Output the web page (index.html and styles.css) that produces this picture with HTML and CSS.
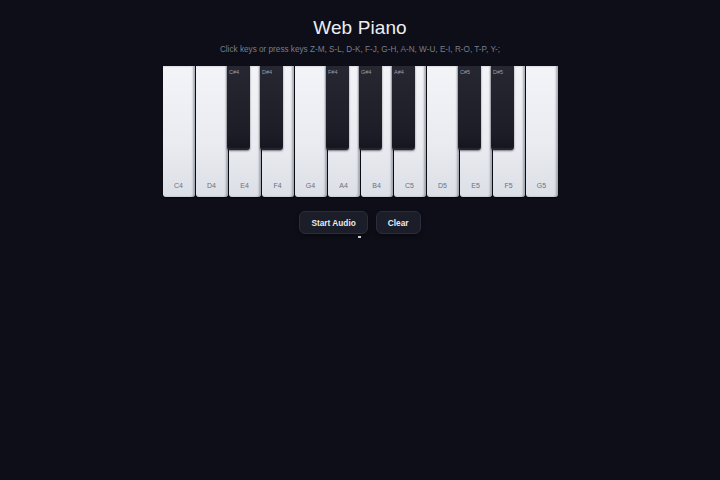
FILE: index.html
```html
<!DOCTYPE html>
<html lang="en">
<head>
<meta charset="utf-8">
<title>Web Piano</title>
<link rel="stylesheet" href="styles.css">
</head>
<body>
<main class="app">
  <h1 class="title">Web Piano</h1>
  <p class="hint">Click keys or press keys Z-M, S-L, D-K, F-J, G-H, A-N, W-U, E-I, R-O, T-P, Y-;</p>
  <div class="piano">
    <div class="key white c1"><span class="label">C4</span></div>
    <div class="key white c2"><span class="label">D4</span></div>
    <div class="key white c3"><span class="label">E4</span></div>
    <div class="key white c4"><span class="label">F4</span></div>
    <div class="key white c5"><span class="label">G4</span></div>
    <div class="key white c6"><span class="label">A4</span></div>
    <div class="key white c7"><span class="label">B4</span></div>
    <div class="key white c8"><span class="label">C5</span></div>
    <div class="key white c9"><span class="label">D5</span></div>
    <div class="key white c10"><span class="label">E5</span></div>
    <div class="key white c11"><span class="label">F5</span></div>
    <div class="key white c12"><span class="label">G5</span></div>
    <div class="key black c3"><span class="blabel">C#4</span></div>
    <div class="key black c4"><span class="blabel">D#4</span></div>
    <div class="key black c6"><span class="blabel">F#4</span></div>
    <div class="key black c7"><span class="blabel">G#4</span></div>
    <div class="key black c8"><span class="blabel">A#4</span></div>
    <div class="key black c10"><span class="blabel">C#5</span></div>
    <div class="key black c11"><span class="blabel">D#5</span></div>
  </div>
  <div class="controls">
    <button class="btn btn-start">Start Audio</button>
    <button class="btn">Clear</button>
  </div>
</main>
</body>
</html>
```
FILE: styles.css
```css
html, body {
  margin: 0;
  padding: 0;
  background: #0d0e17;
  height: 100%;
}
body {
  font-family: "Liberation Sans", Arial, sans-serif;
  color: #e6e8ee;
}
.app {
  display: flex;
  flex-direction: column;
  align-items: center;
  padding-top: 17px;
}
.title {
  margin: 0;
  font-size: 19px;
  line-height: 22px;
  font-weight: 400;
  color: #eceef3;
  letter-spacing: 0.1px;
}
.hint {
  margin: 5px 0 0;
  font-size: 8.2px;
  line-height: 12px;
  color: #7a7e8c;
}
.piano {
  margin-top: 10px;
  display: grid;
  grid-template-columns: repeat(12, 32px);
  grid-template-rows: 131px;
  column-gap: 1px;
}
.key { grid-row: 1; }
.c1 { grid-column: 1; }
.c2 { grid-column: 2; }
.c3 { grid-column: 3; }
.c4 { grid-column: 4; }
.c5 { grid-column: 5; }
.c6 { grid-column: 6; }
.c7 { grid-column: 7; }
.c8 { grid-column: 8; }
.c9 { grid-column: 9; }
.c10 { grid-column: 10; }
.c11 { grid-column: 11; }
.c12 { grid-column: 12; }
.white {
  background: linear-gradient(180deg, #f3f4f8 0%, #e9ebf0 60%, #dcdfe6 100%);
  border-radius: 0 0 3px 3px;
  box-shadow: inset -2px 0 2px rgba(110, 116, 130, 0.55), 0 1px 1px rgba(0,0,0,0.6);
  display: flex;
  align-items: flex-end;
  justify-content: center;
  padding-bottom: 7px;
  box-sizing: border-box;
}
.label {
  font-size: 7px;
  line-height: 8px;
  color: #6c717e;
}
.black {
  z-index: 1;
  align-self: start;
  justify-self: start;
  margin-left: -1.5px;
  width: 23px;
  height: 84px;
  background: linear-gradient(180deg, #262731 0%, #1c1d26 80%, #14151d 100%);
  border-radius: 0 0 3px 3px;
  box-shadow: 0 1px 2px rgba(0,0,0,0.5), inset 0 -2px 1px rgba(70,72,85,0.35);
  box-sizing: border-box;
  padding: 3px 0 0 2px;
}
.blabel {
  display: block;
  font-size: 5.5px;
  line-height: 7px;
  color: #9a9daa;
}
.controls {
  position: relative;
  margin-top: 14px;
  display: flex;
  gap: 8px;
}
.btn {
  font-family: "Liberation Sans", Arial, sans-serif;
  font-size: 8.3px;
  font-weight: 700;
  color: #e8eaf0;
  background: #1b1d29;
  border: 1px solid #2a2d3b;
  border-radius: 6px;
  height: 23px;
  padding: 0 11px;
  box-shadow: 0 2px 4px rgba(0,0,0,0.35);
}
.btn-start { position: relative; }
.btn-start::after {
  content: "";
  position: absolute;
  left: 58px;
  top: 24px;
  width: 3px;
  height: 2px;
  background: #c8cad2;
}
```
